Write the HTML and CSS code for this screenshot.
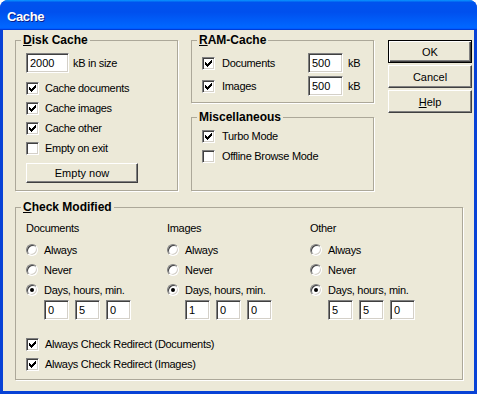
FILE: index.html
```html
<!DOCTYPE html>
<html lang="en">
<head>
  <meta charset="UTF-8">
  <title>Cache</title>
  <link rel="stylesheet" href="styles.css">
</head>
<body>
  <div class="window">
    <div class="titlebar"><span class="title">Cache</span></div>

    <div class="client">
      <div class="top">
        <fieldset class="group disk">
          <legend><u>D</u>isk Cache</legend>
          <div class="size-row">
            <input class="edit size" type="text" value="2000">
            <span>kB in size</span>
          </div>
          <label class="check"><span class="box"><svg width="7" height="7" viewBox="0 0 7 7"><path d="M0 2h1v3H0zM1 3h1v3H1zM2 4h1v3H2zM3 3h1v3H3zM4 2h1v3H4zM5 1h1v3H5zM6 0h1v3H6z"/></svg></span>Cache documents</label>
          <label class="check"><span class="box"><svg width="7" height="7" viewBox="0 0 7 7"><path d="M0 2h1v3H0zM1 3h1v3H1zM2 4h1v3H2zM3 3h1v3H3zM4 2h1v3H4zM5 1h1v3H5zM6 0h1v3H6z"/></svg></span>Cache images</label>
          <label class="check"><span class="box"><svg width="7" height="7" viewBox="0 0 7 7"><path d="M0 2h1v3H0zM1 3h1v3H1zM2 4h1v3H2zM3 3h1v3H3zM4 2h1v3H4zM5 1h1v3H5zM6 0h1v3H6z"/></svg></span>Cache other</label>
          <label class="check"><span class="box"></span>Empty on exit</label>
          <button class="btn empty" type="button">Empty now</button>
        </fieldset>

        <div class="middle">
          <fieldset class="group ram">
            <legend><u>R</u>AM-Cache</legend>
            <div class="ram-row">
              <label class="check wide"><span class="box"><svg width="7" height="7" viewBox="0 0 7 7"><path d="M0 2h1v3H0zM1 3h1v3H1zM2 4h1v3H2zM3 3h1v3H3zM4 2h1v3H4zM5 1h1v3H5zM6 0h1v3H6z"/></svg></span>Documents</label>
              <input class="edit kb" type="text" value="500">
              <span class="unit">kB</span>
            </div>
            <div class="ram-row">
              <label class="check wide"><span class="box"><svg width="7" height="7" viewBox="0 0 7 7"><path d="M0 2h1v3H0zM1 3h1v3H1zM2 4h1v3H2zM3 3h1v3H3zM4 2h1v3H4zM5 1h1v3H5zM6 0h1v3H6z"/></svg></span>Images</label>
              <input class="edit kb" type="text" value="500">
              <span class="unit">kB</span>
            </div>
          </fieldset>

          <fieldset class="group misc">
            <legend>Miscellaneous</legend>
            <label class="check wide"><span class="box"><svg width="7" height="7" viewBox="0 0 7 7"><path d="M0 2h1v3H0zM1 3h1v3H1zM2 4h1v3H2zM3 3h1v3H3zM4 2h1v3H4zM5 1h1v3H5zM6 0h1v3H6z"/></svg></span>Turbo Mode</label>
            <label class="check wide"><span class="box"></span>Offline Browse Mode</label>
          </fieldset>
        </div>

        <div class="buttons">
          <button class="btn default" type="button">OK</button>
          <button class="btn" type="button">Cancel</button>
          <button class="btn" type="button"><u>H</u>elp</button>
        </div>
      </div>

      <fieldset class="group modified">
        <legend><u>C</u>heck Modified</legend>
        <div class="cols">
          <div class="col">
            <div class="col-title">Documents</div>
            <label class="option"><span class="radio"></span>Always</label>
            <label class="option"><span class="radio"></span>Never</label>
            <label class="option"><span class="radio on"><span class="dot"></span></span>Days, hours, min.</label>
            <div class="times">
              <input class="edit time" type="text" value="0">
              <input class="edit time" type="text" value="5">
              <input class="edit time" type="text" value="0">
            </div>
          </div>
          <div class="col">
            <div class="col-title">Images</div>
            <label class="option"><span class="radio"></span>Always</label>
            <label class="option"><span class="radio"></span>Never</label>
            <label class="option"><span class="radio on"><span class="dot"></span></span>Days, hours, min.</label>
            <div class="times">
              <input class="edit time" type="text" value="1">
              <input class="edit time" type="text" value="0">
              <input class="edit time" type="text" value="0">
            </div>
          </div>
          <div class="col">
            <div class="col-title">Other</div>
            <label class="option"><span class="radio"></span>Always</label>
            <label class="option"><span class="radio"></span>Never</label>
            <label class="option"><span class="radio on"><span class="dot"></span></span>Days, hours, min.</label>
            <div class="times">
              <input class="edit time" type="text" value="5">
              <input class="edit time" type="text" value="5">
              <input class="edit time" type="text" value="0">
            </div>
          </div>
        </div>

        <div class="redirect">
          <label class="check"><span class="box"><svg width="7" height="7" viewBox="0 0 7 7"><path d="M0 2h1v3H0zM1 3h1v3H1zM2 4h1v3H2zM3 3h1v3H3zM4 2h1v3H4zM5 1h1v3H5zM6 0h1v3H6z"/></svg></span>Always Check Redirect (Documents)</label>
          <label class="check"><span class="box"><svg width="7" height="7" viewBox="0 0 7 7"><path d="M0 2h1v3H0zM1 3h1v3H1zM2 4h1v3H2zM3 3h1v3H3zM4 2h1v3H4zM5 1h1v3H5zM6 0h1v3H6z"/></svg></span>Always Check Redirect (Images)</label>
        </div>
      </fieldset>
    </div>
  </div>
</body>
</html>
```

FILE: styles.css
```css
* {
  box-sizing: border-box;
}

body {
  margin: 0;
  background: #fff;
  font-family: 'Liberation Sans', Arial, sans-serif;
  font-size: 11px;
  letter-spacing: -0.3px;
  color: #000;
}

.window {
  width: 477px;
  height: 394px;
  display: flex;
  flex-direction: column;
  background: #0842d6;
  border-radius: 8px 8px 0 0;
  overflow: hidden;
}

.titlebar {
  height: 30px;
  flex: none;
  display: flex;
  align-items: center;
  padding: 2px 0 0 7px;
  background: linear-gradient(180deg, #0997ff, #0053ee 8%, #0050ee 40%, #0066ff 88%, #0066ff 93%, #005bff 95%, #003dd7 96%, #003dd7);
}

.title {
  color: #fff;
  font-weight: bold;
  font-size: 13px;
  letter-spacing: -0.4px;
  text-shadow: 1px 1px #0a1f8a;
}

.client {
  flex: 1;
  margin: 0 3px 3px;
  padding: 3px 0 0 12px;
  background: #ece9d8;
}

.top {
  display: flex;
  align-items: stretch;
}

/* group boxes */
.group {
  margin: 0;
  min-width: 0;
  padding: 6px 10px 0;
  border: 1px solid #aca899;
  box-shadow: 1px 1px 0 #fff;
}

.group legend {
  margin-left: -5px;
  padding: 0 2px;
  font-size: 12px;
  font-weight: bold;
  line-height: 14px;
  letter-spacing: 0;
}

.disk {
  width: 163px;
  margin-right: 13px;
  padding-bottom: 7px;
}

.middle {
  width: 183px;
  margin-right: 14px;
  display: flex;
  flex-direction: column;
}

.ram {
  padding-bottom: 6px;
}

.misc {
  flex: 1;
  margin-top: 7px;
  padding-top: 2px;
}

.buttons {
  width: 84px;
  padding-top: 7px;
  display: flex;
  flex-direction: column;
  gap: 2px;
}

/* controls */
.size-row {
  height: 20px;
  display: flex;
  align-items: center;
  gap: 4px;
  margin-bottom: 5px;
}

.check,
.option {
  height: 20px;
  display: flex;
  align-items: center;
  gap: 6px;
  white-space: nowrap;
}

.check.wide {
  gap: 7px;
}

.box {
  width: 13px;
  height: 13px;
  flex: none;
  display: flex;
  align-items: center;
  justify-content: center;
  background: #fff;
  border: 1px solid;
  border-color: #808080 #fff #fff #808080;
  box-shadow: inset 1px 1px #404040, inset -1px -1px #d4d0c8;
}

.box svg {
  display: block;
  fill: #000;
  shape-rendering: crispEdges;
}

.radio {
  width: 12px;
  height: 12px;
  flex: none;
  display: flex;
  align-items: center;
  justify-content: center;
  border-radius: 50%;
  background: #fff;
  border: 1px solid;
  border-color: #808080 #fff #fff #808080;
  box-shadow: inset 1px 1px #404040, inset -1px -1px #d4d0c8;
}

.dot {
  width: 4px;
  height: 4px;
  border-radius: 50%;
  background: #000;
}

.edit {
  height: 20px;
  margin: 0;
  padding: 0 0 0 3px;
  font: inherit;
  color: #000;
  background: #fff;
  border: 1px solid;
  border-color: #808080 #fff #fff #808080;
  box-shadow: inset 1px 1px #404040, inset -1px -1px #d4d0c8;
  outline: none;
}

.size {
  width: 43px;
}

.kb {
  width: 35px;
}

.time {
  width: 25px;
}

.ram-row {
  height: 20px;
  display: flex;
  align-items: center;
}

.ram-row + .ram-row {
  margin-top: 3px;
}

.ram-row .check {
  width: 106px;
}

.unit {
  margin-left: 5px;
}

.btn {
  height: 23px;
  padding: 0;
  font: inherit;
  color: #000;
  background: #ece9d8;
  border: 1px solid;
  border-color: #fff #404040 #404040 #fff;
  box-shadow: inset -1px -1px #808080;
}

.btn.default {
  border-color: #000;
  box-shadow: inset 1px 1px #fff, inset -1px -1px #404040, inset -2px -2px #808080;
}

.empty {
  width: 112px;
  height: 20px;
  margin-top: 5px;
}

/* check modified */
.modified {
  width: 448px;
  margin-top: 9px;
  padding-top: 7px;
  padding-bottom: 5px;
}

.cols {
  display: grid;
  grid-template-columns: 141px 143px 1fr;
}

.col-title {
  line-height: 14px;
  margin-bottom: 5px;
}

.times {
  display: flex;
  gap: 6px;
  margin-left: 18px;
}

.redirect {
  margin-top: 14px;
}
```
